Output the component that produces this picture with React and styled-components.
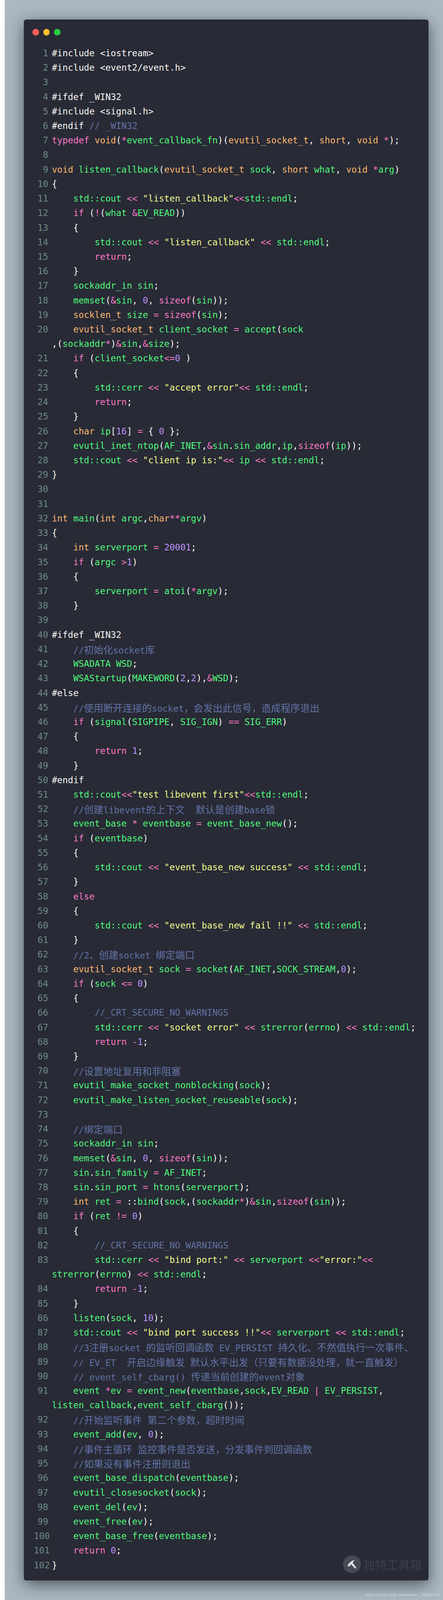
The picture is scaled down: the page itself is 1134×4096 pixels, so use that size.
import React from "react";
import styled, { createGlobalStyle } from "styled-components";

const SOURCE = `#include <iostream>
#include <event2/event.h>

#ifdef _WIN32
#include <signal.h>
#endif // _WIN32
typedef void(*event_callback_fn)(evutil_socket_t, short, void *);

void listen_callback(evutil_socket_t sock, short what, void *arg)
{
    std::cout << "listen_callback"<<std::endl;
    if (!(what &EV_READ))
    {
        std::cout << "listen_callback" << std::endl;
        return;
    }
    sockaddr_in sin;
    memset(&sin, 0, sizeof(sin));
    socklen_t size = sizeof(sin);
    evutil_socket_t client_socket = accept(sock
~,(sockaddr*)&sin,&size);
    if (client_socket<=0 )
    {
        std::cerr << "accept error"<< std::endl;
        return;
    }
    char ip[16] = { 0 };
    evutil_inet_ntop(AF_INET,&sin.sin_addr,ip,sizeof(ip));
    std::cout << "client ip is:"<< ip << std::endl;
}


int main(int argc,char**argv)
{
    int serverport = 20001;
    if (argc >1)
    {
        serverport = atoi(*argv);
    }

#ifdef _WIN32
    //初始化socket库
    WSADATA WSD;
    WSAStartup(MAKEWORD(2,2),&WSD);
#else
    //使用断开连接的socket，会发出此信号，造成程序退出
    if (signal(SIGPIPE, SIG_IGN) == SIG_ERR)
    {
        return 1;
    }
#endif
    std::cout<<"test libevent first"<<std::endl;
    //创建libevent的上下文  默认是创建base锁
    event_base * eventbase = event_base_new();
    if (eventbase)
    {
        std::cout << "event_base_new success" << std::endl;
    }
    else
    {
        std::cout << "event_base_new fail !!" << std::endl;
    }
    //2、创建socket 绑定端口
    evutil_socket_t sock = socket(AF_INET,SOCK_STREAM,0);
    if (sock <= 0)
    {
        //_CRT_SECURE_NO_WARNINGS
        std::cerr << "socket error" << strerror(errno) << std::endl;
        return -1;
    }
    //设置地址复用和非阻塞
    evutil_make_socket_nonblocking(sock);
    evutil_make_listen_socket_reuseable(sock);

    //绑定端口
    sockaddr_in sin;
    memset(&sin, 0, sizeof(sin));
    sin.sin_family = AF_INET;
    sin.sin_port = htons(serverport);
    int ret = ::bind(sock,(sockaddr*)&sin,sizeof(sin));
    if (ret != 0)
    {
        //_CRT_SECURE_NO_WARNINGS
        std::cerr << "bind port:" << serverport <<"error:"<<
~strerror(errno) << std::endl;
        return -1;
    }
    listen(sock, 10);
    std::cout << "bind port success !!"<< serverport << std::endl;
    //3注册socket 的监听回调函数 EV_PERSIST 持久化、不然值执行一次事件、
    // EV_ET  开启边缘触发 默认水平出发（只要有数据没处理，就一直触发）
    // event_self_cbarg() 传递当前创建的event对象
    event *ev = event_new(eventbase,sock,EV_READ | EV_PERSIST,
~listen_callback,event_self_cbarg());
    //开始监听事件 第二个参数，超时时间
    event_add(ev, 0);
    //事件主循环 监控事件是否发送，分发事件到回调函数
    //如果没有事件注册则退出
    event_base_dispatch(eventbase);
    evutil_closesocket(sock);
    event_del(ev);
    event_free(ev);
    event_base_free(eventbase);
    return 0;
}`;

const COLORS = {
  plain: "#f8f8f2",
  comment: "#6272a4",
  string: "#f1fa8c",
  number: "#bd93f9",
  keyword: "#ff79c6",
  type: "#ffb86c",
  name: "#50fa7b",
};

const TOKEN =
  /(\/\/.*)|("[^"]*")|\b(\d+)\b|\b(if|else|return|typedef|sizeof)\b|\b(void|int|short|char|socklen_t|evutil_socket_t)\b|(std::\w+|[A-Za-z_]\w*)|(<<|<=|!=|==|[=&*!>|<-])/g;
const KINDS = ["comment", "string", "number", "keyword", "type", "name", "keyword"];

// split one source line into coloured pieces
function tokenize(text) {
  if (text.startsWith("#")) {
    const at = text.indexOf("//");
    if (at < 0) return [{ kind: "plain", text }];
    return [
      { kind: "plain", text: text.slice(0, at) },
      { kind: "comment", text: text.slice(at) },
    ];
  }
  const out = [];
  let last = 0;
  for (const m of text.matchAll(TOKEN)) {
    if (m.index > last) out.push({ kind: "plain", text: text.slice(last, m.index) });
    const group = m.slice(1).findIndex((g) => g !== undefined);
    out.push({ kind: KINDS[group], text: m[0] });
    last = m.index + m[0].length;
  }
  if (last < text.length) out.push({ kind: "plain", text: text.slice(last) });
  return out;
}

function buildRows() {
  let n = 0;
  return SOURCE.split("\n").map((line) => {
    const wrapped = line.startsWith("~");
    if (!wrapped) n += 1;
    return { number: wrapped ? null : n, tokens: tokenize(wrapped ? line.slice(1) : line) };
  });
}

const GlobalStyle = createGlobalStyle`
  html, body {
    margin: 0;
    padding: 0;
    background: #fff;
  }
`;

const Backdrop = styled.main`
  position: relative;
  box-sizing: border-box;
  height: 4096px;
  margin-left: 11.7px;
  padding: 49.6px 0 0 49.7px;
  background: #abb8c3;
  overflow: hidden;
`;

const Window = styled.section`
  position: relative;
  box-sizing: border-box;
  width: 1035.5px;
  height: 3996px;
  padding: 24.8px 0 18.6px;
  background: #282a36;
  border-radius: 6px;
  box-shadow: 0 10px 42px rgba(0, 0, 0, 0.55);
`;

const Controls = styled.div`
  display: flex;
  gap: 11px;
  height: 16.5px;
  margin: 0 0 27px 22px;
`;

const Dot = styled.span`
  width: 16.5px;
  height: 16.5px;
  border-radius: 50%;
  background: ${(p) => p.$color};
`;

const Code = styled.div`
  font-family: "DejaVu Sans Mono", "Liberation Mono", monospace;
  font-size: 22.75px;
  line-height: 37.23px;
  color: ${COLORS.plain};
`;

const Row = styled.div`
  display: flex;
  height: 37.23px;
  white-space: pre;
`;

const LineNo = styled.span`
  flex: none;
  box-sizing: border-box;
  width: 71.3px;
  padding-right: ${(p) => (p.$wide ? "5.2px" : "9.3px")};
  text-align: right;
  color: #6d8a88;
`;

const Token = styled.span`
  color: ${(p) => COLORS[p.$kind]};
`;

const Cjk = styled.span`
  font-family: "Noto Sans CJK SC", sans-serif;
  font-size: 24.8px;
`;

const Brand = styled.div`
  position: absolute;
  right: 17px;
  bottom: 18.5px;
  display: flex;
  align-items: center;
  gap: 6px;
`;

const BrandBadge = styled.div`
  width: 45.5px;
  height: 45.5px;
  border-radius: 50%;
  background: #474a55;

  svg {
    display: block;
    width: 100%;
    height: 100%;
  }
`;

const BrandName = styled.span`
  font-family: "Noto Sans CJK SC", sans-serif;
  font-size: 30px;
  line-height: 34px;
  color: #3d3f4a;
`;

const SourceUrl = styled.div`
  position: absolute;
  right: 7.6px;
  bottom: 5px;
  font-family: "Liberation Sans", Arial, sans-serif;
  font-size: 11.2px;
  line-height: 16px;
  color: rgba(255, 255, 255, 0.72);
  text-shadow: 1px 1px 1px rgba(0, 0, 0, 0.2);
`;

function HammerIcon() {
  return (
    <svg viewBox="0 0 198 198" aria-hidden="true">
      <path
        fill="#dcdcdf"
        d="M126 52C98 56 62 80 50 118L76 122L88 97L136 147L148 135L108 82L128 54Z"
      />
    </svg>
  );
}

// comments hold Chinese text, which is wider than the latin cells
function CommentText({ text }) {
  return text
    .split(/([\u3000-\u9fff\uff00-\uffef]+)/)
    .map((part, i) => (i % 2 ? <Cjk key={i}>{part}</Cjk> : part));
}

export default function App() {
  const rows = buildRows();
  return (
    <Backdrop>
      <GlobalStyle />
      <Window>
        <Controls>
          <Dot $color="#ff5f56" />
          <Dot $color="#ffbd2e" />
          <Dot $color="#27c93f" />
        </Controls>
        <Code>
          {rows.map((row, i) => (
            <Row key={i}>
              <LineNo $wide={row.number >= 100}>{row.number}</LineNo>
              <span>
                {row.tokens.map((t, j) => (
                  <Token key={j} $kind={t.kind}>
                    {t.kind === "comment" ? <CommentText text={t.text} /> : t.text}
                  </Token>
                ))}
              </span>
            </Row>
          ))}
        </Code>
        <Brand>
          <BrandBadge>
            <HammerIcon />
          </BrandBadge>
          <BrandName>独特工具箱</BrandName>
        </Brand>
      </Window>
      <SourceUrl>https://blog.csdn.net/weixin_34854320</SourceUrl>
    </Backdrop>
  );
}
